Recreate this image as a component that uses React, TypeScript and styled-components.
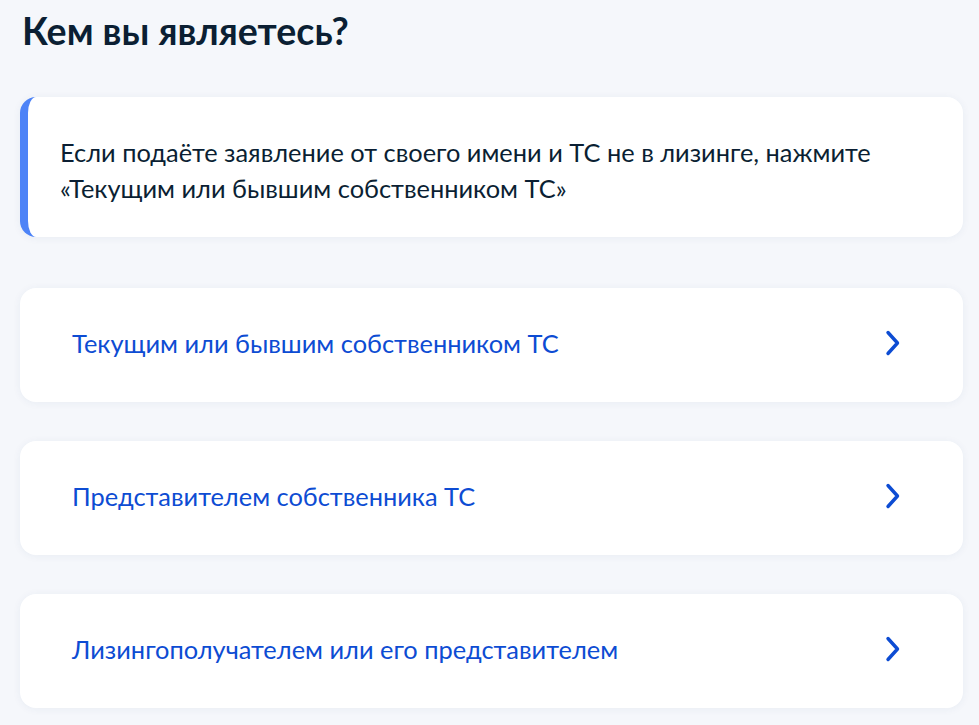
import styled, { createGlobalStyle } from 'styled-components'

const GlobalStyle = createGlobalStyle`
  html, body {
    margin: 0;
    padding: 0;
    background: #f5f7fb;
  }
  body {
    font-family: Lato, "Noto Sans", "Liberation Sans", sans-serif;
    color: #0b1f33;
  }
`

const Page = styled.div`
  display: flex;
  flex-direction: column;
  padding: 7px 16px 18px 20px;
`
const Title = styled.h1`
  margin: 0 0 0 2px;
  font-size: 37.5px;
  line-height: 48px;
  font-weight: 700;
  color: #0b1f33;
`
const InfoCard = styled.div`
  margin-top: 42px;
  background: #ffffff;
  border-radius: 16px;
  border-left: 8px solid #4d83f7;
  box-shadow: 0 1px 8px rgba(30, 60, 120, 0.06);
  padding: 37px 32px 31px 32px;
  font-size: 25.4px;
  line-height: 36px;
  color: #0b1f33;
`
const OptionList = styled.div`
  display: flex;
  flex-direction: column;
  gap: 39px;
  margin-top: 51px;
`
const OptionCard = styled.button`
  display: flex;
  align-items: center;
  justify-content: space-between;
  height: 114px;
  padding: 0 60px 4px 52px;
  border: none;
  border-radius: 16px;
  background: #ffffff;
  box-shadow: 0 1px 8px rgba(30, 60, 120, 0.06);
  font-family: inherit;
  font-size: 25.4px;
  color: #0d4cd3;
  text-align: left;
  cursor: pointer;
`
const Chevron = () => (
  <svg width="20" height="28" viewBox="0 0 20 28" fill="none">
    <path d="M5 3.5 L14.5 14 L5 24.5" stroke="#0d4cd3" strokeWidth="3.4" strokeLinecap="round" strokeLinejoin="round" />
  </svg>
)

const OPTIONS = [
  'Текущим или бывшим собственником ТС',
  'Представителем собственника ТС',
  'Лизингополучателем или его представителем',
]

export default function App() {
  return (
    <Page>
      <GlobalStyle />
      <Title>Кем вы являетесь?</Title>
      <InfoCard>
        Если подаёте заявление от своего имени и ТС не в лизинге, нажмите
        <br />
        «Текущим или бывшим собственником ТС»
      </InfoCard>
      <OptionList>
        {OPTIONS.map((label) => (
          <OptionCard key={label}>
            <span>{label}</span>
            <Chevron />
          </OptionCard>
        ))}
      </OptionList>
    </Page>
  )
}
